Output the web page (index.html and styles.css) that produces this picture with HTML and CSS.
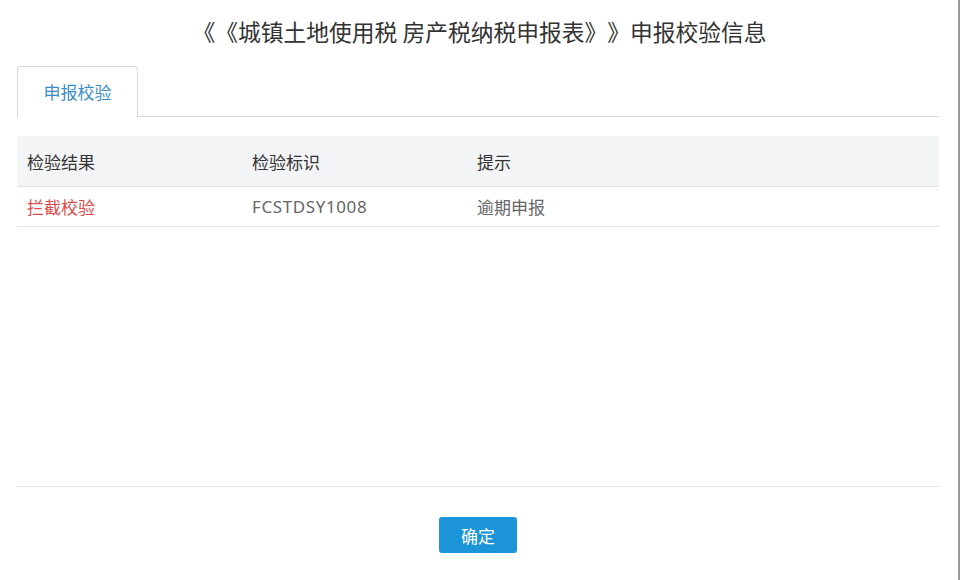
FILE: index.html
```html
<!DOCTYPE html>
<html lang="zh-CN">
<head>
  <meta charset="UTF-8">
  <title>申报校验信息</title>
  <link rel="stylesheet" href="styles.css">
</head>
<body>

<div class="dialog">
  <h1 class="title">《《城镇土地使用税 房产税纳税申报表》》申报校验信息</h1>

  <div class="main">
    <div class="tabs">
      <div class="tab active">申报校验</div>
    </div>

    <table class="check-table">
      <thead>
        <tr>
          <th>检验结果</th>
          <th>检验标识</th>
          <th>提示</th>
          <th></th>
        </tr>
      </thead>
      <tbody>
        <tr>
          <td class="block">拦截校验</td>
          <td class="code">FCSTDSY1008</td>
          <td>逾期申报</td>
          <td></td>
        </tr>
      </tbody>
    </table>
  </div>

  <div class="footer">
    <button class="btn-ok">确定</button>
  </div>
</div>

</body>
</html>
```

FILE: styles.css
```css
html, body {
  margin: 0;
  height: 100%;
  background: #fff;
}

body {
  font-family: "Noto Sans", "Noto Sans CJK SC", sans-serif;
  color: #333;
}

.dialog {
  box-sizing: border-box;
  height: 580px;
  padding: 0 19px 0 17px;
  border-right: 2px solid #9a9a9a;
  display: flex;
  flex-direction: column;
}

.title {
  margin: 0;
  height: 66px;
  line-height: 64px;
  text-align: center;
  font-family: "Noto Sans CJK SC", sans-serif;
  font-size: 22.75px;
  font-weight: normal;
  color: #333;
  padding-left: 3px;
  text-spacing-trim: space-all;
}

.main {
  flex: 1;
}

.tabs {
  display: flex;
  border-bottom: 1px solid #d9d9d9;
  height: 50px;
}

.tab {
  width: 119px;
  height: 50px;
  line-height: 51px;
  text-align: center;
  font-size: 17px;
  color: #3a8ec4;
  border: 1px solid #d9d9d9;
  border-bottom-color: #fff;
  border-radius: 4px 4px 0 0;
  background: #fff;
}

.check-table {
  width: 100%;
  margin-top: 19px;
  border-collapse: collapse;
  font-size: 17px;
}

.check-table th,
.check-table td {
  text-align: left;
  font-weight: normal;
  padding: 0 10px;
  width: 205px;
  border-bottom: 1px solid #e3e3e3;
}

.check-table th:last-child,
.check-table td:last-child {
  width: auto;
}

.check-table th {
  background: #f2f4f5;
  height: 50px;
  color: #333;
}

.check-table td {
  height: 39px;
  color: #666;
}

.check-table td.block {
  color: #e0494a;
}

.check-table td.code {
  letter-spacing: 0.6px;
}

.footer {
  border-top: 1px solid #e5e5e5;
  height: 94px;
  display: flex;
  justify-content: center;
  align-items: flex-start;
  padding-top: 30px;
  box-sizing: border-box;
}

.btn-ok {
  width: 78px;
  height: 36px;
  border: none;
  border-radius: 3px;
  background: #1b95d8;
  color: #fff;
  font-family: "Noto Sans CJK SC", sans-serif;
  font-size: 17px;
  cursor: pointer;
}
```
